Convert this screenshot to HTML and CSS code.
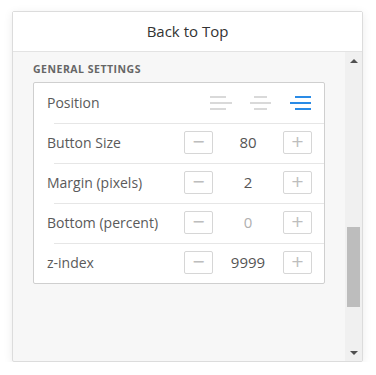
FILE: index.html
```html
<!DOCTYPE html>
<html lang="en">
<head>
  <meta charset="UTF-8">
  <title>Back to Top</title>
  <link rel="stylesheet" href="styles.css">
</head>
<body>

  <div class="panel">
    <div class="panel-header">Back to Top</div>

    <div class="panel-body">
      <div class="panel-content">
        <div class="section-title">General Settings</div>

        <div class="settings-card">
          <div class="setting-row">
            <span class="setting-label">Position</span>
            <div class="align-group">
              <svg class="align-icon" width="22" height="14" viewBox="0 0 22 14">
                <path d="M0 1H16M0 7H22M0 13H16" stroke="#cdcdcd" stroke-width="1.5" fill="none"/>
              </svg>
              <svg class="align-icon" width="22" height="14" viewBox="0 0 22 14">
                <path d="M4 1H17M0 7H21M4 13H17" stroke="#cdcdcd" stroke-width="1.5" fill="none"/>
              </svg>
              <svg class="align-icon" width="22" height="14" viewBox="0 0 22 14">
                <path d="M5 1H21M0 7H21M5 13H21" stroke="#2a8be6" stroke-width="2.2" fill="none"/>
              </svg>
            </div>
          </div>

          <div class="setting-row">
            <span class="setting-label">Button Size</span>
            <div class="stepper">
              <button class="step-btn">&minus;</button>
              <span class="step-value">80</span>
              <button class="step-btn">+</button>
            </div>
          </div>

          <div class="setting-row">
            <span class="setting-label">Margin (pixels)</span>
            <div class="stepper">
              <button class="step-btn">&minus;</button>
              <span class="step-value">2</span>
              <button class="step-btn">+</button>
            </div>
          </div>

          <div class="setting-row">
            <span class="setting-label">Bottom (percent)</span>
            <div class="stepper">
              <button class="step-btn">&minus;</button>
              <span class="step-value muted">0</span>
              <button class="step-btn">+</button>
            </div>
          </div>

          <div class="setting-row">
            <span class="setting-label">z-index</span>
            <div class="stepper">
              <button class="step-btn">&minus;</button>
              <span class="step-value">9999</span>
              <button class="step-btn">+</button>
            </div>
          </div>
        </div>
      </div>

      <div class="scrollbar">
        <div class="arrow-up"></div>
        <div class="track">
          <div class="thumb"></div>
        </div>
        <div class="arrow-down"></div>
      </div>
    </div>
  </div>

</body>
</html>
```

FILE: styles.css
```css
body {
  margin: 0;
  padding: 11px 0 0 12px;
  background-color: #fff;
  font-family: 'Open Sans', sans-serif;
}

.panel {
  width: 349px;
  border: 1px solid #dcdcdc;
  border-radius: 2px;
  box-shadow: 0 2px 10px rgba(0, 0, 0, 0.08);
  background-color: #f7f7f7;
}

.panel-header {
  height: 39px;
  line-height: 39px;
  text-align: center;
  font-size: 15px;
  color: #333;
  background-color: #fff;
  border-bottom: 1px solid #e3e3e3;
}

.panel-body {
  display: flex;
  height: 309px;
}

.panel-content {
  flex: 1;
  padding: 10px 20px 0 20px;
}

.section-title {
  font-size: 10.5px;
  font-weight: bold;
  letter-spacing: 0.5px;
  text-transform: uppercase;
  color: #666;
  height: 20px;
  line-height: 14px;
}

.settings-card {
  background-color: #fff;
  border: 1px solid #cfcfcf;
  border-radius: 2px;
}

.setting-row {
  display: flex;
  align-items: center;
  justify-content: space-between;
  box-sizing: border-box;
  height: 40px;
  padding: 0 12px 2px 13px;
  background: linear-gradient(#e6e6e6, #e6e6e6) no-repeat 20px 0 / calc(100% - 20px) 1px;
}

.setting-row:first-child {
  background: none;
}

.setting-label {
  font-size: 14px;
  color: #5a5a5a;
}

.align-group {
  display: flex;
  gap: 18px;
  padding-top: 1px;
}

.align-icon {
  display: block;
}

.stepper {
  display: flex;
  align-items: center;
}

.step-btn {
  display: flex;
  align-items: center;
  justify-content: center;
  width: 29px;
  height: 23px;
  padding: 0;
  border: 1px solid #d6d6d6;
  border-radius: 2px;
  background-color: #fff;
  color: #bdbdbd;
  font-family: 'DejaVu Sans', sans-serif;
  font-size: 16px;
  line-height: 1;
}

.step-value {
  width: 70px;
  text-align: center;
  font-size: 15px;
  color: #555;
}

.step-value.muted {
  color: #b0b0b0;
}

.scrollbar {
  width: 17px;
  display: flex;
  flex-direction: column;
  background-color: #f0f0f0;
}

.arrow-up,
.arrow-down {
  height: 17px;
  display: flex;
  align-items: center;
  justify-content: center;
}

.arrow-up::after {
  content: "";
  border-left: 4px solid transparent;
  border-right: 4px solid transparent;
  border-bottom: 4px solid #505050;
}

.arrow-down::after {
  content: "";
  border-left: 4px solid transparent;
  border-right: 4px solid transparent;
  border-top: 4px solid #505050;
}

.track {
  flex: 1;
  padding: 0 2px;
}

.thumb {
  margin-top: 158px;
  height: 80px;
  background-color: #bdbdbd;
}
```
